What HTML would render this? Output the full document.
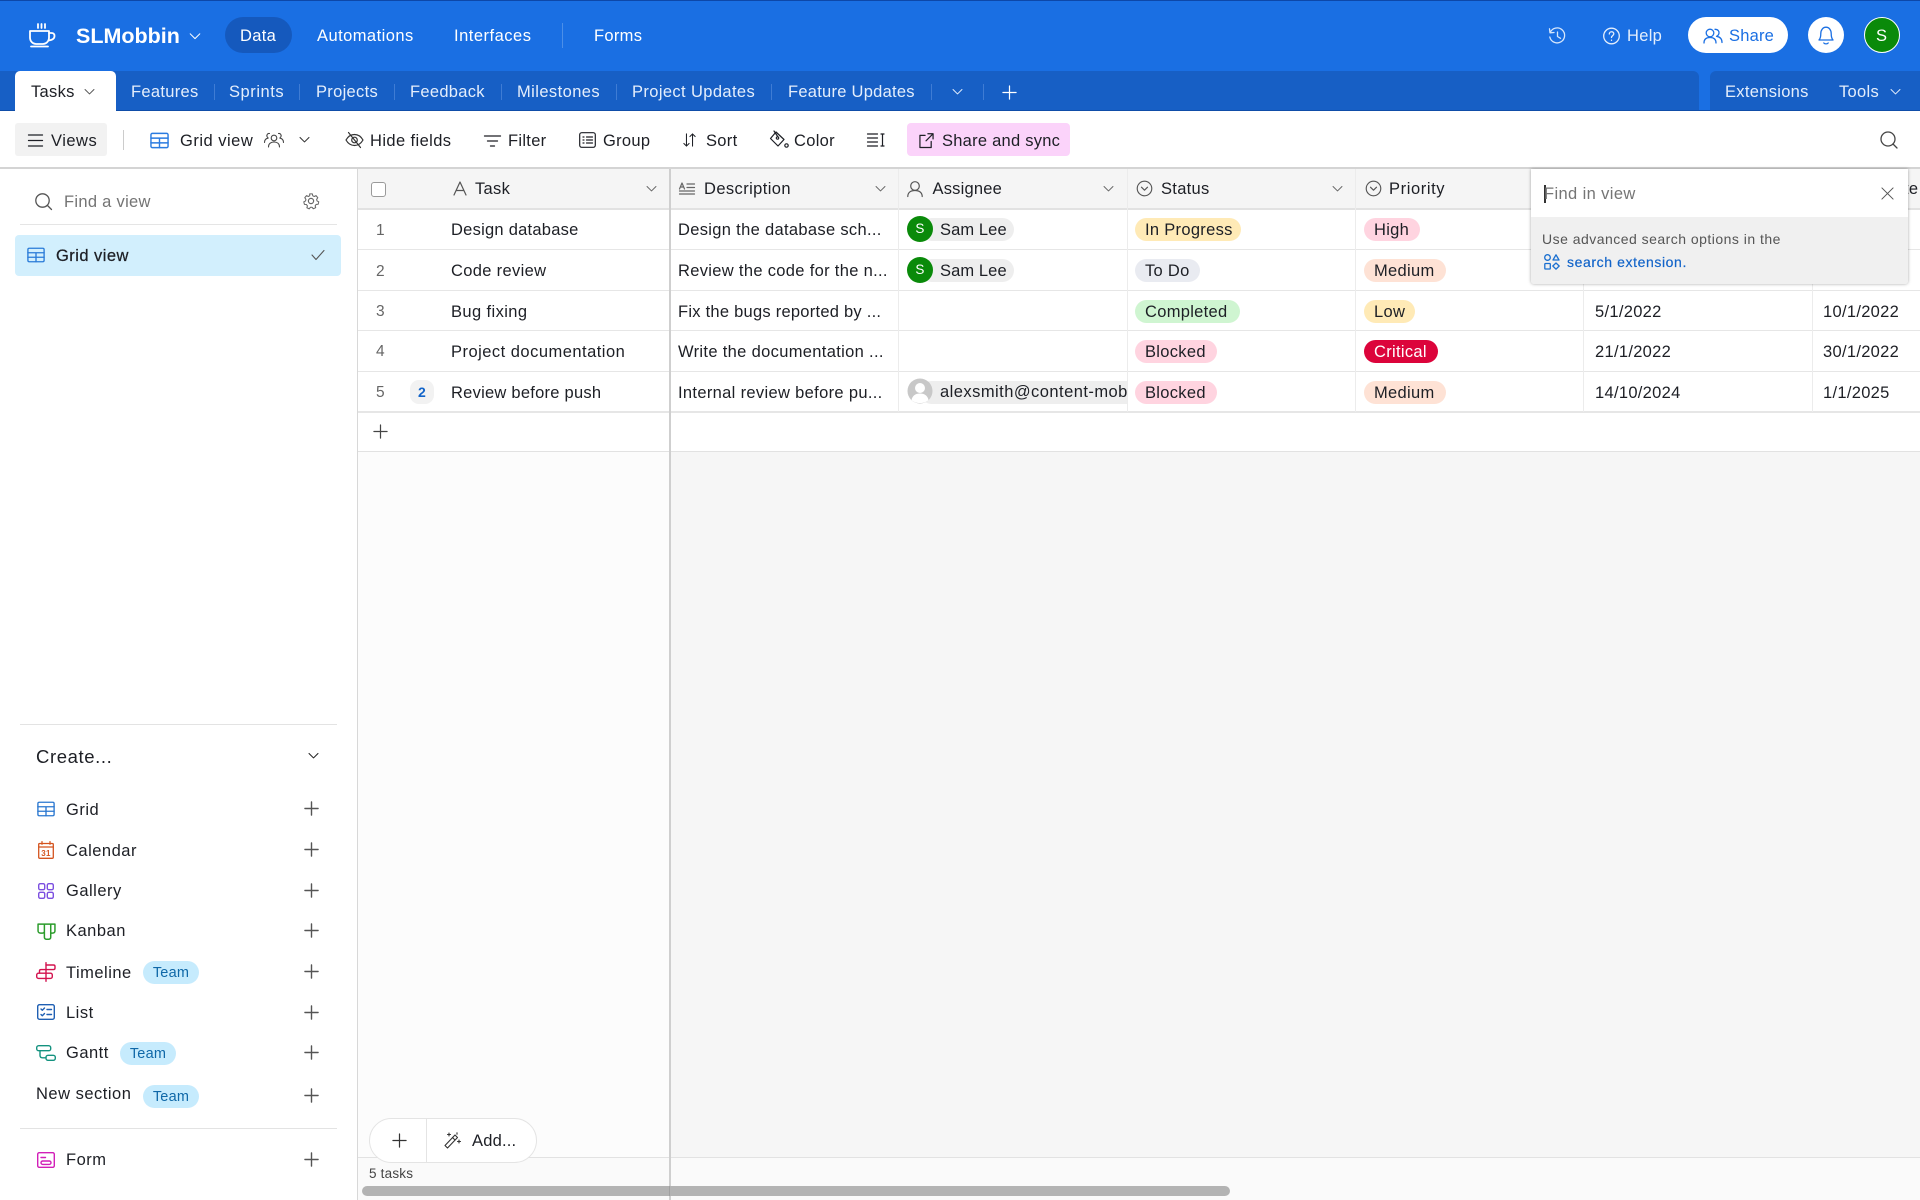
<!DOCTYPE html>
<html lang="en"><head><meta charset="utf-8"><title>SLMobbin</title>
<style>
html,body{margin:0;padding:0;background:#fff}
#r{position:relative;width:1920px;height:1200px;overflow:hidden;background:#fff;font-family:"Liberation Sans",sans-serif;font-size:16.5px;letter-spacing:.3px;color:#1d1f25}
#r div{position:absolute}
.t{position:absolute;white-space:nowrap;line-height:20px;height:20px}
svg.i{position:absolute;fill:none;stroke:currentColor;stroke-width:1.5;stroke-linecap:round;stroke-linejoin:round;overflow:visible}
.w{color:#fff}.tb{color:#e4eefc}.h{color:#1d1f25}
.p{position:absolute;height:23px;border-radius:12px;line-height:25px;padding:0 10px;white-space:nowrap;box-sizing:border-box}
.n{color:#666;font-size:15.5px}
.s{letter-spacing:.5px}
.team{position:absolute;height:23px;width:56px;border-radius:12px;background:#c6ebfd;color:#0f68a8;font-size:14.5px;line-height:24px;text-align:center;letter-spacing:.2px}
</style></head><body>
<svg width="0" height="0" style="position:absolute"><defs>
<symbol id="chev" viewBox="0 0 16 16"><path d="M2.5 5.5 8 11l5.5-5.5"/></symbol>
<symbol id="plus" viewBox="0 0 16 16"><path d="M8 1v14M1 8h14"/></symbol>
<symbol id="grid" viewBox="0 0 20 17"><rect x="1" y="1" width="18" height="15" rx="1.5"/><path d="M1 6h18M1 11h18M10 6v10"/></symbol>
<symbol id="sel" viewBox="0 0 18 18"><circle cx="9" cy="9" r="7.7"/><path d="M5.8 7.6 9 10.8l3.2-3.2"/></symbol>
</defs></svg>
<div id="r">

<!-- top bar -->
<div style="left:0;top:0;width:1920px;height:111px;background:#1a6fe3"></div>
<div style="left:0;top:0;width:1920px;height:1px;background:#0d47a8"></div>
<svg class="i w" style="left:28px;top:23px;width:28px;height:24px;stroke-width:1.8" viewBox="0 0 28 24"><path d="M10 1v4M13.5 1v4M17 1v4"/><path d="M2 8h19v6.5c0 4-3 6.5-6 6.5H8c-3 0-6-2.5-6-6.500z"/><path d="M21 10h2.500c2 0 3 1 3 3s-1.500 4-6 4.500"/><path d="M3 23.500h17"/></svg>
<span class="t w" style="left:76px;top:26px;font-size:21.5px;font-weight:700;letter-spacing:0">SLMobbin</span>
<svg class="i w" style="left:188px;top:29px;width:14px;height:14px;stroke-width:1.2"><use href="#chev"/></svg>
<div style="left:225px;top:17px;width:67px;height:36px;border-radius:18px;background:#1559bd"></div>
<span class="t w" style="left:240px;top:26px">Data</span>
<span class="t w" style="left:317px;top:26px;letter-spacing:.45px">Automations</span>
<span class="t w" style="left:454px;top:26px;letter-spacing:.5px">Interfaces</span>
<div style="left:562px;top:23px;width:1px;height:25px;background:#4c8fe8"></div>
<span class="t w" style="left:594px;top:26px">Forms</span>

<svg class="i" style="left:1548px;top:27px;width:18px;height:18px;color:#d6e6fb;stroke-width:1.3" viewBox="0 0 18 18"><path d="M2.200 5.500A7.500 7.500 0 1 1 1.800 10"/><path d="M1.500 1.800 2 5.800l4-.3"/><path d="M9.500 5v4.500l3 1.800"/></svg>
<svg class="i" style="left:1603px;top:27px;width:17px;height:18px;color:#e4eefc;stroke-width:1.3" viewBox="0 0 17 18"><circle cx="8.500" cy="9" r="7.800"/><path d="M6.300 7c0-3 4.500-3 4.500-.2 0 1.800-2.300 1.800-2.300 3.700"/><path d="M8.500 13.200v.2"/></svg>
<span class="t tb" style="left:1627px;top:26px">Help</span>
<div style="left:1688px;top:17px;width:100px;height:36px;border-radius:18px;background:#fff"></div>
<svg class="i" style="left:1703px;top:28px;width:20px;height:16px;color:#1a6fe3;stroke-width:1.3" viewBox="0 0 20 16"><circle cx="7" cy="5" r="3.800"/><path d="M1 15c0-4 2.500-5.500 6-5.500s6 1.500 6 5.500"/><path d="M12 1.300c3 0 4.300 2 4 3.800-.2 1.500-1.200 2.700-2.500 3.200 3 .5 5.500 2 5.500 6.200"/></svg>
<span class="t" style="left:1729px;top:26px;color:#1a6fe3;letter-spacing:.2px">Share</span>
<div style="left:1808px;top:17px;width:36px;height:36px;border-radius:50%;background:#fff"></div>
<svg class="i" style="left:1818px;top:26px;width:16px;height:19px;color:#1a6fe3;stroke-width:1.3" viewBox="0 0 16 19"><path d="M1 14c1.500-1.500 1.800-3 1.800-6.500C2.800 4 5 1.200 8 1.200s5.200 2.800 5.200 6.300c0 3.500.3 5 1.800 6.500z"/><path d="M5.800 17c1 1.200 3.400 1.200 4.400 0"/></svg>
<div style="left:1864px;top:17px;width:36px;height:36px;border-radius:50%;background:#0a8a0a;box-sizing:border-box;border:1.5px solid #fff"></div>
<span class="t w" style="left:1876px;top:26px">S</span>

<!-- tab bar -->
<div style="left:0;top:71px;width:1699px;height:40px;background:#175fc5;border-top-right-radius:6px"></div>
<div style="left:1710px;top:71px;width:210px;height:40px;background:#175fc5;border-top-left-radius:6px"></div>
<div style="left:0;top:110px;width:1920px;height:1px;background:#0f4da8"></div>
<div style="left:15px;top:71px;width:101px;height:41px;background:#fff;border-radius:5px 5px 0 0"></div>
<span class="t" style="left:31px;top:82px">Tasks</span>
<svg class="i" style="left:83px;top:85px;width:13px;height:13px;color:#555;stroke-width:1.2"><use href="#chev"/></svg>
<span class="t tb" style="left:131px;top:82px">Features</span>
<div style="left:214px;top:84px;width:1px;height:16px;background:#3f7cd4"></div>
<span class="t tb" style="left:229px;top:82px;letter-spacing:.55px">Sprints</span>
<div style="left:299px;top:84px;width:1px;height:16px;background:#3f7cd4"></div>
<span class="t tb" style="left:316px;top:82px">Projects</span>
<div style="left:394px;top:84px;width:1px;height:16px;background:#3f7cd4"></div>
<span class="t tb" style="left:410px;top:82px">Feedback</span>
<div style="left:501px;top:84px;width:1px;height:16px;background:#3f7cd4"></div>
<span class="t tb" style="left:517px;top:82px;letter-spacing:.42px">Milestones</span>
<div style="left:616px;top:84px;width:1px;height:16px;background:#3f7cd4"></div>
<span class="t tb" style="left:632px;top:82px;letter-spacing:.38px">Project Updates</span>
<div style="left:771px;top:84px;width:1px;height:16px;background:#3f7cd4"></div>
<span class="t tb" style="left:788px;top:82px;letter-spacing:.26px">Feature Updates</span>
<div style="left:931px;top:84px;width:1px;height:16px;background:#3f7cd4"></div>
<svg class="i tb" style="left:951px;top:85px;width:13px;height:13px;stroke-width:1.2"><use href="#chev"/></svg>
<div style="left:983px;top:84px;width:1px;height:16px;background:#3f7cd4"></div>
<svg class="i w" style="left:1002px;top:85px;width:15px;height:15px;stroke-width:1.3"><use href="#plus"/></svg>
<span class="t tb" style="left:1725px;top:82px">Extensions</span>
<span class="t tb" style="left:1839px;top:82px">Tools</span>
<svg class="i tb" style="left:1889px;top:85px;width:13px;height:13px;stroke-width:1.2"><use href="#chev"/></svg>

<!-- toolbar -->
<div style="left:15px;top:123px;width:92px;height:33px;border-radius:3px;background:#f2f2f2"></div>
<svg class="i" style="left:28px;top:134px;width:15px;height:13px;stroke-width:1.3" viewBox="0 0 15 13"><path d="M.5 1h14M.5 6.500h14M.5 12h14"/></svg>
<span class="t" style="left:51px;top:131px;letter-spacing:.5px">Views</span>
<div style="left:123px;top:130px;width:1px;height:20px;background:#ccc"></div>
<svg class="i" style="left:150px;top:132px;width:19px;height:17px;color:#2a7be0"><use href="#grid"/></svg>
<span class="t" style="left:180px;top:131px;letter-spacing:.5px">Grid view</span>
<svg class="i" style="left:264px;top:132px;width:20px;height:16px;stroke-width:1.1;color:#444" viewBox="0 0 20 16"><circle cx="10" cy="6" r="2.800"/><path d="M4.500 15c0-3.500 2.500-5 5.500-5s5.500 1.500 5.500 5"/><path d="M5.500 1.500c-2-.3-3 1.500-2.500 3 .2.800.8 1.300 1.200 1.600C2 6.500.5 8 .5 10.500M14.500 1.500c2-.3 3 1.500 2.500 3-.2.800-.8 1.300-1.200 1.600 2.200.4 3.700 1.900 3.700 4.400"/></svg>
<svg class="i" style="left:298px;top:133px;width:13px;height:13px;color:#333;stroke-width:1.3"><use href="#chev"/></svg>
<svg class="i" style="left:345px;top:131px;width:19px;height:18px;color:#333;stroke-width:1.2" viewBox="0 0 19 18"><path d="M1 9c2-3.500 5-5.500 8.500-5.500S16 5.500 18 9c-2 3.500-5 5.500-8.500 5.500S3 12.500 1 9z"/><circle cx="9.500" cy="9" r="2.800"/><path d="M3.500 1.500 15.500 16.500"/></svg>
<span class="t" style="left:370px;top:131px;letter-spacing:.4px">Hide fields</span>
<svg class="i" style="left:484px;top:135px;width:17px;height:12px;stroke-width:1.3" viewBox="0 0 17 12"><path d="M.5 1h16M3.500 6h10M6.500 11h4"/></svg>
<span class="t" style="left:508px;top:131px">Filter</span>
<svg class="i" style="left:579px;top:132px;width:17px;height:16px;stroke-width:1.2" viewBox="0 0 17 16"><rect x=".7" y=".7" width="15.600" height="14.600" rx="2"/><path d="M4 5h1M7.500 5h6M4 8h1M7.500 8h6M4 11h1M7.500 11h6"/></svg>
<span class="t" style="left:603px;top:131px">Group</span>
<svg class="i" style="left:683px;top:132px;width:13px;height:16px;stroke-width:1.2" viewBox="0 0 15 16"><path d="M4 1v14M1 12l3 3 3-3M11 15V1M8 4l3-3 3 3"/></svg>
<span class="t" style="left:706px;top:131px">Sort</span>
<svg class="i" style="left:769px;top:130px;width:20px;height:20px;stroke-width:1.2" viewBox="0 0 20 20"><path d="M7 2 1.500 8.500 9 16l6-6.500z"/><path d="M5 1l4 6"/><circle cx="8.500" cy="8" r="1.200"/><circle cx="17.500" cy="15.500" r="1.700"/></svg>
<span class="t" style="left:794px;top:131px">Color</span>
<svg class="i" style="left:867px;top:133px;width:18px;height:14px;stroke-width:1.2" viewBox="0 0 18 14"><path d="M.5 1h10M.5 5h10M.5 9h10M.5 13h10M15.500 1v12M14 1h3M14 13h3"/></svg>
<div style="left:907px;top:123px;width:163px;height:33px;border-radius:4px;background:#fbd3fa"></div>
<svg class="i" style="left:919px;top:133px;width:15px;height:15px;stroke-width:1.3" viewBox="0 0 16 16"><path d="M6.500 2.500H1v13h12V9"/><path d="M9.500.8h5.500v5.500M15 .8 7.500 8.300"/></svg>
<span class="t" style="left:942px;top:131px;letter-spacing:.25px">Share and sync</span>
<svg class="i" style="left:1880px;top:131px;width:18px;height:18px;color:#444;stroke-width:1.3" viewBox="0 0 18 18"><circle cx="8" cy="8" r="7"/><path d="m13 13 4 4"/></svg>
<div style="left:0;top:167px;width:1920px;height:2px;background:#d4d4d4"></div>

<!-- sidebar -->
<svg class="i" style="left:35px;top:193px;width:17px;height:17px;color:#555;stroke-width:1.3" viewBox="0 0 17 17"><circle cx="7.500" cy="7.500" r="6.700"/><path d="m12.500 12.500 4 4"/></svg>
<span class="t" style="left:64px;top:192px;color:#747474">Find a view</span>
<svg class="i" style="left:302px;top:192px;width:18px;height:18px;color:#666;stroke-width:1.2" viewBox="0 0 18 18"><circle cx="9" cy="9" r="2.600"/><path d="M7.500 1h3l.5 2.200 1.700.8 2-1 2 2.400-1.300 1.800.4 1.800 2 1-.7 2.800-2.300.2-1.100 1.500.6 2.200-2.700 1.200-1.500-1.700h-1.800L7 18l-2.700-1.200.6-2.200-1.100-1.500-2.300-.2L.8 10l2-1 .4-1.800L1.900 5.400l2-2.400 2 1L7.500 3.200z" transform="translate(1.100 1) scale(.88)"/></svg>
<div style="left:20px;top:224px;width:317px;height:1px;background:#e5e5e5"></div>
<div style="left:15px;top:235px;width:326px;height:41px;border-radius:4px;background:#d2effd"></div>
<svg class="i" style="left:27px;top:247px;width:18px;height:16px;color:#2a7bd8"><use href="#grid"/></svg>
<span class="t" style="left:56px;top:246px;letter-spacing:.45px;-webkit-text-stroke:.25px #1d1f25">Grid view</span>
<svg class="i" style="left:311px;top:249px;width:14px;height:12px;color:#555;stroke-width:1.1" viewBox="0 0 14 12"><path d="m1 6 4 4.500L13 1.500"/></svg>

<div style="left:20px;top:724px;width:317px;height:1px;background:#e3e3e3"></div>
<span class="t" style="left:36px;top:747px;font-size:18.5px;letter-spacing:.6px">Create...</span>
<svg class="i" style="left:307px;top:749px;width:13px;height:13px;color:#222;stroke-width:1.3"><use href="#chev"/></svg>

<svg class="i" style="left:37px;top:801px;width:18px;height:16px;color:#2a77d0"><use href="#grid"/></svg>
<span class="t s" style="left:66px;top:800px">Grid</span>
<svg class="i" style="left:38px;top:841px;width:16px;height:18px;color:#d4541f;stroke-width:1.3" viewBox="0 0 16 18"><rect x=".7" y="2.500" width="14.600" height="14.800" rx="1"/><path d="M.7 6h14.600M4 .7v2.500M12 .7v2.500"/><text x="8" y="15" text-anchor="middle" font-size="8" font-weight="700" fill="#d4541f" stroke="none" font-family="Liberation Sans">31</text></svg>
<span class="t s" style="left:66px;top:841px">Calendar</span>
<svg class="i" style="left:38px;top:883px;width:16px;height:16px;color:#7c4fe0;stroke-width:1.4" viewBox="0 0 16 16"><rect x=".7" y=".7" width="6" height="6" rx="1.500"/><rect x="9.300" y=".7" width="6" height="6" rx="1.500"/><rect x=".7" y="9.300" width="6" height="6" rx="1.500"/><rect x="9.300" y="9.300" width="6" height="6" rx="1.500"/></svg>
<span class="t s" style="left:66px;top:881px">Gallery</span>
<svg class="i" style="left:36.500px;top:922.500px;width:19px;height:17px;color:#2b9c2b;stroke-width:1.4" viewBox="0 0 18 16"><path d="M1 1h16v6.500c0 1.500-1 2-2.500 2H13M7 1v7c0 1-.8 1.500-1.800 1.500H3.500C2 9.500 1 8.800 1 7.500V1M7 1v12.500c0 1 .7 1.800 1.700 1.800h2.600c1 0 1.700-.8 1.700-1.800V1"/></svg>
<span class="t s" style="left:66px;top:921px">Kanban</span>
<svg class="i" style="left:36px;top:962px;width:20px;height:20px;color:#d3134f;stroke-width:1.4" viewBox="0 0 20 20"><path d="M10 .7v18.600"/><path d="M10 3h7.500c1 0 1.500.7 1.500 1.500v1.500c0 .9-.6 1.600-1.500 1.600H10"/><path d="M10 7.600H5c-.9 0-1.500.6-1.500 1.400v2"/><path d="M10 11.200H2.500c-1 0-1.800.8-1.800 1.800v1.600c0 1 .8 1.800 1.800 1.800h12c1 0 1.800-.8 1.800-1.800V13c0-1-.8-1.800-1.800-1.800H10"/></svg>
<span class="t s" style="left:66px;top:963px">Timeline</span>
<div class="team" style="left:143px;top:961px">Team</div>
<svg class="i" style="left:37px;top:1004px;width:18px;height:16px;color:#1f5fb3;stroke-width:1.4" viewBox="0 0 18 16"><rect x=".7" y=".7" width="16.600" height="14.600" rx="1.800"/><path d="m4 5 1.300 1.300L7.500 4M4 10.500l1.300 1.300L7.500 9.500M10 5.500h4.500M10 10.500h4.500"/></svg>
<span class="t s" style="left:66px;top:1003px">List</span>
<svg class="i" style="left:36px;top:1045px;width:20px;height:16px;color:#14927f;stroke-width:1.4" viewBox="0 0 20 16"><rect x=".7" y=".7" width="14" height="5" rx="2"/><rect x="10" y="10.300" width="9.300" height="5" rx="2"/><path d="M4 5.700v4.700c0 1.500 1 2.400 2.500 2.400H10"/></svg>
<span class="t s" style="left:66px;top:1043px">Gantt</span>
<div class="team" style="left:120px;top:1042px">Team</div>
<span class="t s" style="left:36px;top:1084px">New section</span>
<div class="team" style="left:143px;top:1085px">Team</div>
<div style="left:20px;top:1128px;width:317px;height:1px;background:#e3e3e3"></div>
<svg class="i" style="left:37px;top:1152px;width:18px;height:16px;color:#d21fb8;stroke-width:1.4" viewBox="0 0 18 16"><rect x=".7" y=".7" width="16.600" height="14.600" rx="1.500"/><path d="M4 5.500h4.500"/><rect x="4" y="9" width="10" height="3.400" rx="1.700"/></svg>
<span class="t s" style="left:66px;top:1150px">Form</span>
<svg class="i" style="left:304px;top:801px;width:15px;height:15px;color:#555"><use href="#plus"/></svg>
<svg class="i" style="left:304px;top:842px;width:15px;height:15px;color:#555"><use href="#plus"/></svg>
<svg class="i" style="left:304px;top:883px;width:15px;height:15px;color:#555"><use href="#plus"/></svg>
<svg class="i" style="left:304px;top:923px;width:15px;height:15px;color:#555"><use href="#plus"/></svg>
<svg class="i" style="left:304px;top:964px;width:15px;height:15px;color:#555"><use href="#plus"/></svg>
<svg class="i" style="left:304px;top:1005px;width:15px;height:15px;color:#555"><use href="#plus"/></svg>
<svg class="i" style="left:304px;top:1045px;width:15px;height:15px;color:#555"><use href="#plus"/></svg>
<svg class="i" style="left:304px;top:1088px;width:15px;height:15px;color:#555"><use href="#plus"/></svg>
<svg class="i" style="left:304px;top:1152px;width:15px;height:15px;color:#555"><use href="#plus"/></svg>
<div style="left:357px;top:169px;width:1px;height:1031px;background:#d8d8d8"></div>

<!-- grid -->
<div style="left:358px;top:452px;width:312px;height:705px;background:#fcfcfc"></div>
<div style="left:670px;top:452px;width:1250px;height:705px;background:#f6f6f6"></div>
<div style="left:358px;top:1157px;width:1562px;height:43px;background:#fafafa"></div>
<div style="left:358px;top:1157px;width:1562px;height:1px;background:#e2e2e2"></div>
<div style="left:358px;top:169px;width:1562px;height:39px;background:#f5f5f5"></div>
<div style="left:358px;top:208px;width:1562px;height:2px;background:#e2e2e2"></div>
<div style="left:358px;top:249px;width:1562px;height:1px;background:#e6e6e6"></div>
<div style="left:358px;top:290px;width:1562px;height:1px;background:#e6e6e6"></div>
<div style="left:358px;top:330px;width:1562px;height:1px;background:#e6e6e6"></div>
<div style="left:358px;top:371px;width:1562px;height:1px;background:#e6e6e6"></div>
<div style="left:358px;top:411px;width:1562px;height:2px;background:#e6e6e6"></div>
<div style="left:358px;top:451px;width:1562px;height:1px;background:#e2e2e2"></div>
<div style="left:669px;top:169px;width:1.5px;height:1031px;background:#cfcfcf"></div>
<div style="left:898px;top:169px;width:1px;height:243px;background:#ececec"></div>
<div style="left:1127px;top:169px;width:1px;height:243px;background:#ececec"></div>
<div style="left:1355px;top:169px;width:1px;height:243px;background:#ececec"></div>
<div style="left:1583px;top:169px;width:1px;height:243px;background:#ececec"></div>
<div style="left:1812px;top:169px;width:1px;height:243px;background:#ececec"></div>

<div style="left:371px;top:182px;width:13px;height:13px;border:1.5px solid #9a9a9a;border-radius:3px;background:#fff"></div>
<svg class="i" style="left:453px;top:181px;width:14px;height:15px;color:#555;stroke-width:1.2" viewBox="0 0 14 15"><path d="M1 14 7 1l6 13M3.500 9.500h7"/></svg>
<span class="t" style="left:475px;top:179px">Task</span>
<svg class="i" style="left:645px;top:182px;width:13px;height:13px;color:#666;stroke-width:1.2"><use href="#chev"/></svg>
<svg class="i" style="left:679px;top:182px;width:16px;height:13px;color:#666;stroke-width:1.2" viewBox="0 0 16 13"><path d="M.5 7 3 1l2.500 6M1.500 5h3M8 2h7.500M8 5.500h7.500M.5 9h15M.5 12h15"/></svg>
<span class="t" style="left:704px;top:179px;letter-spacing:.4px">Description</span>
<svg class="i" style="left:874px;top:182px;width:13px;height:13px;color:#666;stroke-width:1.2"><use href="#chev"/></svg>
<svg class="i" style="left:907px;top:181px;width:16px;height:16px;color:#555;stroke-width:1.2" viewBox="0 0 16 16"><circle cx="8" cy="5" r="4.300"/><path d="M.8 15.500c0-4 3-6 7.200-6s7.200 2 7.200 6"/></svg>
<span class="t" style="left:932.5px;top:179px;letter-spacing:.2px">Assignee</span>
<svg class="i" style="left:1102px;top:182px;width:13px;height:13px;color:#666;stroke-width:1.2"><use href="#chev"/></svg>
<svg class="i" style="left:1136px;top:180px;width:17px;height:17px;color:#555;stroke-width:1.2"><use href="#sel"/></svg>
<span class="t" style="left:1161px;top:179px">Status</span>
<svg class="i" style="left:1331px;top:182px;width:13px;height:13px;color:#666;stroke-width:1.2"><use href="#chev"/></svg>
<svg class="i" style="left:1365px;top:180px;width:17px;height:17px;color:#555;stroke-width:1.2"><use href="#sel"/></svg>
<span class="t" style="left:1389px;top:179px;letter-spacing:.6px">Priority</span>
<span class="t" style="left:1904px;top:179px">te</span>

<!-- rows -->
<span class="t n" style="left:376px;top:221px">1</span>
<span class="t n" style="left:376px;top:262px">2</span>
<span class="t n" style="left:376px;top:302px">3</span>
<span class="t n" style="left:376px;top:342px">4</span>
<span class="t n" style="left:376px;top:383px">5</span>
<div style="left:410px;top:380px;width:24px;height:24px;border-radius:9px;background:#f2f2f2;color:#1264c9;font-size:14px;line-height:25px;text-align:center;font-weight:700">2</div>
<span class="t" style="left:451px;top:220px;letter-spacing:.25px">Design database</span>
<span class="t" style="left:451px;top:261px;letter-spacing:.33px">Code review</span>
<span class="t" style="left:451px;top:302px;letter-spacing:.4px">Bug fixing</span>
<span class="t" style="left:451px;top:342px;letter-spacing:.48px">Project documentation</span>
<span class="t" style="left:451px;top:383px;letter-spacing:.25px">Review before push</span>
<span class="t" style="left:678px;top:220px;letter-spacing:.32px">Design the database sch...</span>
<span class="t" style="left:678px;top:261px;letter-spacing:.32px">Review the code for the n...</span>
<span class="t" style="left:678px;top:302px;letter-spacing:.25px">Fix the bugs reported by ...</span>
<span class="t" style="left:678px;top:342px;letter-spacing:.33px">Write the documentation ...</span>
<span class="t" style="left:678px;top:383px;letter-spacing:.33px">Internal review before pu...</span>
<svg class="i" style="left:373px;top:424px;width:15px;height:15px;color:#444;stroke-width:1.3"><use href="#plus"/></svg>

<div class="p" style="left:920px;top:218px;width:94px;background:#eeeeee"></div>
<div style="left:907px;top:216px;width:26px;height:26px;border-radius:50%;background:#0a8a0a;color:#fff;font-size:13.5px;line-height:26px;text-align:center">S</div>
<span class="t" style="left:940px;top:220px;letter-spacing:.1px">Sam Lee</span>
<div class="p" style="left:920px;top:259px;width:94px;background:#eeeeee"></div>
<div style="left:907px;top:257px;width:26px;height:26px;border-radius:50%;background:#0a8a0a;color:#fff;font-size:13.5px;line-height:26px;text-align:center">S</div>
<span class="t" style="left:940px;top:261px;letter-spacing:.1px">Sam Lee</span>
<div style="left:907px;top:378px;width:220px;height:27px;overflow:hidden">
<div class="p" style="left:13px;top:3px;width:240px;background:#eeeeee"></div>
<svg style="position:absolute;left:0;top:0;width:26px;height:26px" viewBox="0 0 26 26"><circle cx="13" cy="13" r="12.5" fill="#c8c8c8"/><circle cx="13" cy="10" r="5" fill="#fff"/><path d="M4.500 22c1-4.500 4-6.500 8.500-6.500s7.500 2 8.500 6.500c-2 2-5 3-8.500 3s-6.500-1-8.500-3z" fill="#fff"/></svg>
<span class="t" style="left:33px;top:4px;letter-spacing:.46px">alexsmith@content-mobbin.com</span>
</div>

<div class="p" style="left:1135px;top:218px;width:106px;background:#ffeab6">In Progress</div>
<div class="p" style="left:1135px;top:259px;width:65px;background:#e9ebf1">To Do</div>
<div class="p" style="left:1135px;top:300px;width:105px;background:#cff5d1">Completed</div>
<div class="p" style="left:1135px;top:340px;width:82px;background:#ffd4e0">Blocked</div>
<div class="p" style="left:1135px;top:381px;width:82px;background:#ffd4e0">Blocked</div>
<div class="p" style="left:1364px;top:218px;width:56px;background:#ffd4e0">High</div>
<div class="p" style="left:1364px;top:259px;width:82px;background:#fee2d5">Medium</div>
<div class="p" style="left:1364px;top:300px;width:51px;background:#ffeab6">Low</div>
<div class="p" style="left:1364px;top:340px;width:74px;background:#dc043b;color:#fff">Critical</div>
<div class="p" style="left:1364px;top:381px;width:82px;background:#fee2d5">Medium</div>

<span class="t" style="left:1595px;top:302px">5/1/2022</span>
<span class="t" style="left:1595px;top:342px">21/1/2022</span>
<span class="t" style="left:1595px;top:383px">14/10/2024</span>
<span class="t" style="left:1823px;top:302px">10/1/2022</span>
<span class="t" style="left:1823px;top:342px">30/1/2022</span>
<span class="t" style="left:1823px;top:383px">1/1/2025</span>

<!-- find popover -->
<div style="left:1531px;top:169px;width:377px;height:115px;background:#fff;box-shadow:0 0 3px rgba(0,0,0,.35);border-radius:0 0 3px 3px;overflow:hidden">
<div style="left:0;top:48px;width:377px;height:67px;background:#f0f0f0"></div>
</div>
<div style="left:1544px;top:185px;width:1.5px;height:18px;background:#333"></div>
<span class="t" style="left:1544px;top:184px;color:#757575;letter-spacing:.38px">Find in view</span>
<svg class="i" style="left:1881px;top:187px;width:13px;height:13px;color:#555;stroke-width:1.1" viewBox="0 0 14 14"><path d="m1 1 12 12M13 1 1 13"/></svg>
<span class="t" style="left:1542px;top:229px;font-size:14px;color:#555;letter-spacing:.48px">Use advanced search options in the</span>
<svg class="i" style="left:1544px;top:254px;width:16px;height:16px;color:#1a6fd0;stroke-width:1.3" viewBox="0 0 16 16"><circle cx="3.500" cy="3.500" r="2.800"/><path d="M12 .8 15 6H9z"/><rect x=".8" y="9.500" width="5.500" height="5.500" rx=".8"/><path d="m12 9 3.200 3-3.200 3.200L8.800 12z"/></svg>
<span class="t" style="left:1567px;top:252px;font-size:14px;color:#1264c9;letter-spacing:.6px;-webkit-text-stroke:.2px #1264c9">search extension.</span>

<!-- bottom -->
<div style="left:369px;top:1118px;width:168px;height:45px;box-sizing:border-box;border:1.5px solid #e4e4e4;border-radius:23px;background:#fff"></div>
<div style="left:426px;top:1119px;width:1px;height:43px;background:#e4e4e4"></div>
<svg class="i" style="left:392px;top:1133px;width:15px;height:15px;color:#333;stroke-width:1.3"><use href="#plus"/></svg>
<svg class="i" style="left:444px;top:1132px;width:17px;height:17px;color:#333;stroke-width:1.1" viewBox="0 0 17 17"><path d="M1 13.500 11 3l2.500 2.500L3.500 16z"/><path d="M8.500 5.500 11 8"/><path d="M5 1v3M3.500 2.500h3M15 8v3M13.500 9.500h3M13 .8v1.400"/></svg>
<span class="t" style="left:472px;top:1131px;letter-spacing:.2px">Add...</span>
<span class="t" style="left:369px;top:1164px;font-size:13.5px;color:#444;letter-spacing:.2px">5 tasks</span>
<div style="left:362px;top:1186px;width:868px;height:10px;border-radius:5px;background:#b3b3b3"></div>
<div style="left:669px;top:1186px;width:1px;height:10px;background:#a0a0a0"></div>

</div>
</body></html>
